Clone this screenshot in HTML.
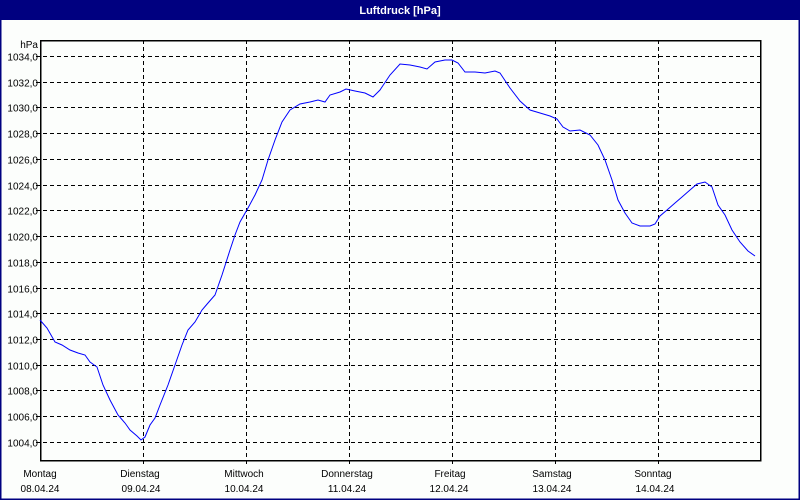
<!DOCTYPE html>
<html><head><style>
html,body{margin:0;padding:0;}
body{width:800px;height:500px;position:relative;background:#fff;font-family:"Liberation Sans",Tahoma,sans-serif;overflow:hidden;}
</style></head><body>
<svg width="800" height="500" style="position:absolute;left:0;top:0" font-family="Liberation Sans, sans-serif" font-size="10">
<rect x="0.5" y="0.5" width="799" height="499" fill="#fcfefc" stroke="#000080" stroke-width="2"/>
<rect x="0" y="0" width="800" height="20" fill="#000080"/>
<text x="400" y="14" fill="#fff" font-weight="bold" font-size="11" text-anchor="middle">Luftdruck [hPa]</text>
<g stroke="#000" stroke-width="1" stroke-dasharray="4,3" shape-rendering="crispEdges">
<line x1="143.5" y1="40" x2="143.5" y2="466"/>
<line x1="246.5" y1="40" x2="246.5" y2="466"/>
<line x1="349.5" y1="40" x2="349.5" y2="466"/>
<line x1="452.5" y1="40" x2="452.5" y2="466"/>
<line x1="555.5" y1="40" x2="555.5" y2="466"/>
<line x1="658.5" y1="40" x2="658.5" y2="466"/>
</g>
<g stroke="#000" stroke-width="1" stroke-dasharray="4,3" shape-rendering="crispEdges" id="h"></g>
<rect x="40.5" y="40.5" width="720" height="420" fill="none" stroke="#000" stroke-width="1.5" shape-rendering="crispEdges"/>
<text x="38" y="48" text-anchor="end">hPa</text>
<g id="yl" text-anchor="end"></g>
<g text-anchor="middle">
<text x="40" y="477">Montag</text><text x="40" y="492">08.04.24</text>
<text x="140" y="477">Dienstag</text><text x="141" y="492">09.04.24</text>
<text x="244" y="477">Mittwoch</text><text x="244" y="492">10.04.24</text>
<text x="347" y="477">Donnerstag</text><text x="347" y="492">11.04.24</text>
<text x="450" y="477">Freitag</text><text x="449" y="492">12.04.24</text>
<text x="552" y="477">Samstag</text><text x="552" y="492">13.04.24</text>
<text x="653" y="477">Sonntag</text><text x="655" y="492">14.04.24</text>
</g>
<polyline fill="none" stroke="#0000ff" stroke-width="1" points="40,320 47,328 55,342 62,345 70,350 78,353 85,355 90,362 97,367 103,385 110,400 118,415 125,423 130,430 137,436 141,440 145,437 150,425 155,418 160,405 168,385 175,365 182,345 188,330 195,322 202,310 208,303 215,295 222,275 230,250 235,235 240,222 248,208 255,195 262,180 268,160 275,140 282,122 290,110 300,104 310,102 318,100 325,102 330,95 340,92 346,89 355,91 365,93 373,97 380,90 390,75 400,64 410,65 420,67 427,69 435,62 445,60 452,60 458,63 465,72 475,72 485,73 495,71 500,73 510,88 520,101 530,110 540,113 550,116 557,119 563,127 570,131 580,130 590,135 598,145 605,160 612,180 618,200 625,213 632,223 640,226 650,226 655,224 660,216 667,210 675,203 682,197 690,190 697,184 705,182 712,187 718,205 725,215 732,230 740,242 748,251 755,256"/>
</svg>
<script>
var h=document.getElementById('h'),yl=document.getElementById('yl'),ns='http://www.w3.org/2000/svg';
for(var i=0;i<=15;i++){var v=1034-2*i;var y=Math.round(56+i*25.73)+0.5;
var l=document.createElementNS(ns,'line');l.setAttribute('x1',36);l.setAttribute('x2',760);l.setAttribute('y1',y);l.setAttribute('y2',y);h.appendChild(l);
var t=document.createElementNS(ns,'text');t.setAttribute('x',38);t.setAttribute('y',y+4);t.textContent=v+',0';yl.appendChild(t);}
</script>
</body></html>
